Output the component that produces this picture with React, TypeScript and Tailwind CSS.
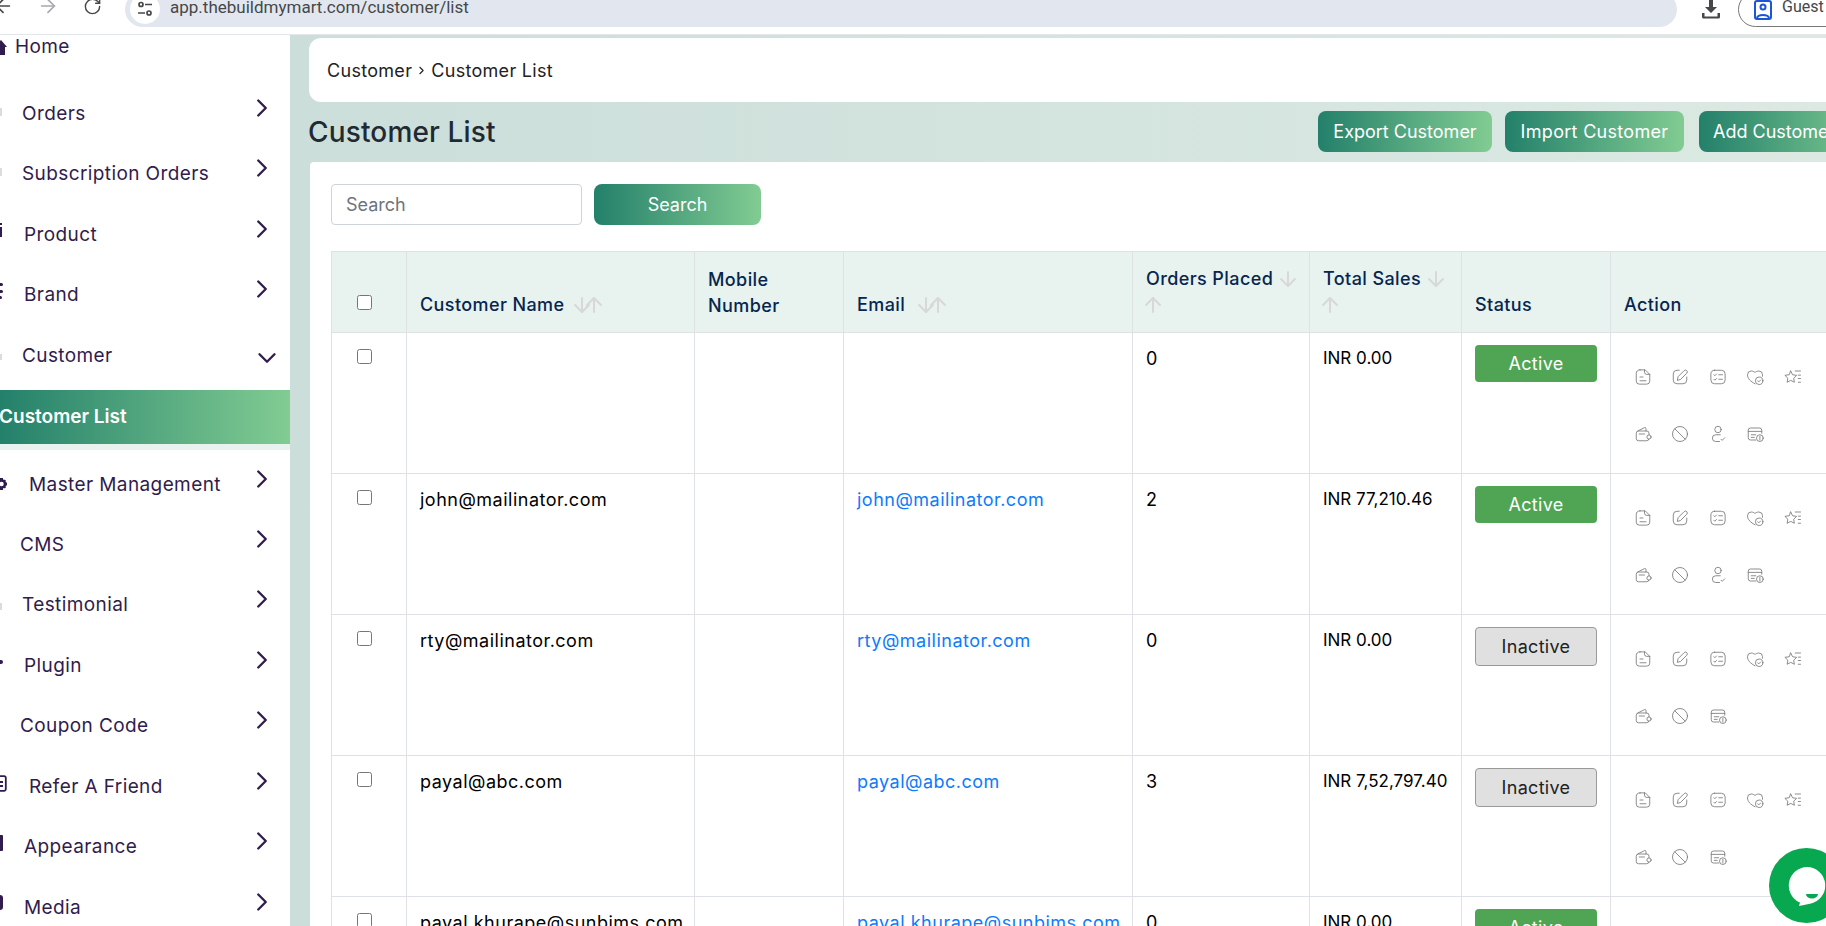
import React from "react";
import { ArrowDown, ArrowLeft, ArrowRight, ArrowUp, ChevronDown, ChevronRight, RotateCw } from "lucide-react";

const grad = "bg-[linear-gradient(90deg,#23806a,#82cc93)]";

function Ic({ children }: { children: React.ReactNode }) {
  return (
    <svg width="18" height="18" viewBox="0 0 24 24" fill="none" stroke="#757575" strokeWidth="1.1" strokeLinecap="round" strokeLinejoin="round">
      {children}
    </svg>
  );
}
const Note = () => <Ic><path d="M8 2.500h7l6 6v9a4 4 0 0 1-4 4H7a4 4 0 0 1-4-4v-10a5 5 0 0 1 5-5z" /><path d="M14 2.500v3a3 3 0 0 0 3 3h4" /><path d="M8 12h4M8 17h8" /></Ic>;
const Pen = () => <Ic><path d="M11 3H8a5 5 0 0 0-5 5v8a5 5 0 0 0 5 5h8a5 5 0 0 0 5-5v-4" /><path d="M8.500 16l1-4.500 8-8a2.300 2.300 0 0 1 3.500 3.500l-8 8z" /></Ic>;
const Check = () => <Ic><rect x="2.500" y="3" width="19" height="18" rx="5" /><path d="M6.500 9l1.300 1.300L10 8M6.500 15l1.300 1.300L10 14M13 9h5M13 15h5" /></Ic>;
const Heart = () => <Ic><path d="M12 21C6 18 2 14 2 9a5 5 0 0 1 5-5c2 0 4 1 5 2 1-1 3-2 5-2a5 5 0 0 1 5 5v2" /><circle cx="17.500" cy="17" r="5" fill="#fff" /><path d="M15.500 17l1.500 1.500 2.500-2.500" /></Ic>;
const Star = () => <Ic><path d="M9 4l2.400 5 5.400.8-3.900 3.800.9 5.400L9 16.500 4.200 19l.9-5.400L1.200 9.800l5.400-.8z" /><path d="M15 4h7M19 9.500h3M19 14h3M19 19h3" /></Ic>;
const Wallet = () => <Ic><path d="M20 13v-2a3 3 0 0 0-3-3H6a3 3 0 0 0-3 3v7a3 3 0 0 0 3 3h11a3 3 0 0 0 3-3" /><path d="M5 8l9-4.500a1.500 1.500 0 0 1 2 1.300V8" /><circle cx="20" cy="16" r="2.800" fill="#fff" /><path d="M7 12h7" /></Ic>;
const Ban = () => <Ic><circle cx="12" cy="12" r="10" /><path d="M5 5l14 14" /></Ic>;
const UserCheck = () => <Ic><circle cx="12" cy="6" r="4.300" /><path d="M15 13H9a4.500 4.500 0 0 0 0 9h5" /><path d="M16 19l1.500 1.500L21 17" /></Ic>;
const Bill = () => <Ic><path d="M21 11V7a3 3 0 0 0-3-3H6a3 3 0 0 0-3 3v10a3 3 0 0 0 3 3h7" /><path d="M3 8.500h18M7 13h6M7 16.500h4" /><circle cx="18.500" cy="17.500" r="4.500" fill="#fff" /><path d="M18.500 15v5" /></Ic>;

const faint = "absolute left-0 w-[1.5px] bg-[#dcdcdc]";
const dark = "absolute left-0 bg-[#301c4d]";

const nav: { t: string; p: string; h: string; m?: React.ReactNode }[] = [
  { t: "Orders", p: "pl-[22px]", h: "h-[60px]", m: <span className={`${faint} top-[24px] h-[8px]`} /> },
  { t: "Subscription Orders", p: "pl-[22px]", h: "h-[61px]", m: <span className={`${faint} top-[24px] h-[8px]`} /> },
  { t: "Product", p: "pl-[24px]", h: "h-[60px]", m: <><span className={`${dark} top-[18px] w-[2px] h-[2px]`} /><span className={`${dark} top-[22px] w-[2px] h-[10px]`} /></> },
  { t: "Brand", p: "pl-[24px]", h: "h-[61px]", m: <><span className={`${dark} top-[18px] w-[3px] h-[3px] rounded-r-full`} /><span className={`${dark} top-[25px] w-[3px] h-[3px] rounded-r-full`} /><span className={`${dark} top-[31px] w-[2px] h-[3px] rounded-r-full`} /></> },
];
const nav2: { t: string; p: string; h: string; m?: React.ReactNode }[] = [
  { t: "Master Management", p: "pl-[29px]", h: "h-[60px]", m: <svg className="absolute left-0 top-[23px]" width="7" height="12" viewBox="0 0 7 12"><circle cx="1.500" cy="6" r="3.500" fill="none" stroke="#301c4d" strokeWidth="2.500" /><path d="M0 0h3v2H0zM0 10h3v2H0zM5 4.500h2v3H5zM4 1.500l2 1-1 2-2-1zM4 10.500l2-1-1-2-2 1z" fill="#301c4d" /></svg> },
  { t: "CMS", p: "pl-[20px]", h: "h-[60px]" },
  { t: "Testimonial", p: "pl-[22px]", h: "h-[61px]", m: <span className={`${faint} top-[28px] h-[7px]`} /> },
  { t: "Plugin", p: "pl-[24px]", h: "h-[60px]", m: <span className={`${dark} top-[24px] w-[2.500px] h-[4px] rounded-r-full`} /> },
  { t: "Coupon Code", p: "pl-[20px]", h: "h-[61px]" },
  { t: "Refer A Friend", p: "pl-[29px]", h: "h-[60px]", m: <svg className="absolute left-0 top-[18px]" width="7" height="17" viewBox="0 0 7 17"><path d="M-3 1.200h7a1.800 1.800 0 0 1 1.800 1.800v11a1.800 1.800 0 0 1-1.800 1.800h-7" fill="none" stroke="#301c4d" strokeWidth="1.800" /><path d="M0 6h3v2H0zM0 10h3v2H0z" fill="#301c4d" /></svg> },
  { t: "Appearance", p: "pl-[24px]", h: "h-[61px]", m: <span className={`${dark} top-[18px] w-[2.500px] h-[16px] rounded-r-[1px]`} /> },
  { t: "Media", p: "pl-[24px]", h: "h-[60px]", m: <span className={`${dark} top-[17px] w-[3px] h-[15px] rounded-r-full`} /> },
];

function NavItem({ t, p, h, m }: { t: string; p: string; h: string; m?: React.ReactNode }) {
  return (
    <div className={`flex items-center justify-between pr-[20px] ${p} ${h} relative`}>
      {m}
      <span className="text-[19px] tracking-[0.4px]">{t}</span>
      <ChevronRight className="w-[30px] h-[30px] -mt-[13px] -mr-[7px]" strokeWidth={1.9} />
    </div>
  );
}

const arrow = "w-[24px] h-[24px] text-[#d8d8d8] shrink-0";

function Sort({ label, wrap, gap }: { label: string; wrap?: boolean; gap: string }) {
  if (wrap) {
    return (
      <div className="leading-[28px]">
        <div className={`flex items-center whitespace-nowrap ${gap}`}>
          <span className="shrink-0">{label}</span>
          <ArrowDown className={arrow} strokeWidth={2} />
        </div>
        <ArrowUp className={`${arrow} -ml-[5px] mb-[2px]`} strokeWidth={2} />
      </div>
    );
  }
  return (
    <div className={`flex items-center leading-[28px] whitespace-nowrap ${gap}`}>
      <span>{label}</span>
      <span className="flex -space-x-[12px]">
        <ArrowDown className={arrow} strokeWidth={2} />
        <ArrowUp className={arrow} strokeWidth={2} />
      </span>
    </div>
  );
}

const rows = [
  { n: "", e: "", o: "0", s: "INR 0.00", a: true, u: true },
  { n: "john@mailinator.com", e: "john@mailinator.com", o: "2", s: "INR 77,210.46", a: true, u: true },
  { n: "rty@mailinator.com", e: "rty@mailinator.com", o: "0", s: "INR 0.00", a: false, u: false },
  { n: "payal@abc.com", e: "payal@abc.com", o: "3", s: "INR 7,52,797.40", a: false, u: false },
  { n: "payal.khurape@sunbims.com", e: "payal.khurape@sunbims.com", o: "0", s: "INR 0.00", a: true, u: false },
];

const th = "border border-[#dde3e3] px-[13px] pb-[13px] align-bottom text-left font-medium tracking-[0.4px]";
const cell = "border border-[#dee2e6] px-[13px] align-top whitespace-nowrap";
const td = `${cell} pt-[12px] tracking-[0.5px]`;

export default function App() {
  return (
    <div className="relative w-[1826px] h-[926px] overflow-hidden bg-white text-[18px] font-['Inter','Noto_Sans',sans-serif]">
      <header className="h-[35px] overflow-hidden border-b border-[#e3e7ea] bg-white">
        <div className="flex items-center h-[35px] -mt-[8px] font-['Roboto',sans-serif] text-[#45474a]">
          <ArrowLeft className="w-[22px] h-[22px] -ml-[8px] -mt-[7px] shrink-0" strokeWidth={1.8} />
          <ArrowRight className="w-[22px] h-[22px] ml-[23px] -mt-[7px] text-[#a5a8ad] shrink-0" strokeWidth={1.8} />
          <RotateCw className="w-[19px] h-[19px] ml-[24px] -mt-[7px] shrink-0" strokeWidth={1.8} />
          <div className="ml-[23px] w-[1552px] shrink-0 h-[35px] rounded-full bg-[#e2e7ef] flex items-center pl-[5px]">
            <span className="w-[30px] h-[30px] rounded-full bg-white flex items-center justify-center shrink-0 -mt-[1px]">
              <svg width="16" height="16" viewBox="0 0 16 16" fill="none" stroke="#45474a" strokeWidth="1.700"><circle cx="4" cy="3.500" r="2" /><path d="M8 3.500h7M1 12h7" /><circle cx="12" cy="12" r="2" /></svg>
            </span>
            <span className="ml-[10px] text-[17px] -mt-[4px]">app.thebuildmymart.com/customer/list</span>
          </div>
          <svg className="ml-[23px] shrink-0 -mt-[2px]" width="22" height="22" viewBox="0 0 22 22" fill="#45474a"><path d="M9 1h4v8h4l-6 6-6-6h4z" /><path d="M2 15h2.500v3.500h13V15H20v4a1.500 1.500 0 0 1-1.500 1.500h-15A1.500 1.500 0 0 1 2 19z" /></svg>
          <div className="ml-[16px] h-[35px] w-[120px] shrink-0 rounded-full border border-[#777] flex items-center pl-[15px] gap-[10px]">
            <svg width="18" height="20" viewBox="0 0 18 20" fill="none" stroke="#1a56d6" strokeWidth="2"><rect x="1" y="1" width="16" height="18" rx="2" /><circle cx="9" cy="7" r="2.500" /><path d="M3 18c1-4 11-4 12 0" /></svg>
            <span className="text-[16px] -mt-[5px]">Guest</span>
          </div>
        </div>
      </header>

      <div className="flex h-[891px]">
        <aside className="w-[290px] shrink-0 bg-white text-[#301c4d] overflow-hidden">
          <div className="flex items-center h-[40px] pl-[15px] -mt-[8px] relative">
            <svg className="absolute left-0 top-[13px]" width="7" height="15" viewBox="0 0 7 15" fill="#301c4d"><path d="M-6 7L1 0l6 7H5v8H-4V7z" /></svg>
            <span className="text-[19px] tracking-[0.4px]">Home</span>
          </div>
          <div className="h-[17px]" />
          {nav.map((n) => <NavItem key={n.t} {...n} />)}
          <div className="flex items-center justify-between pl-[22px] pr-[8px] h-[60px] relative">
            <span className={`${faint} top-[28px] h-[6px]`} />
            <span className="text-[19px] tracking-[0.4px]">Customer</span>
            <ChevronDown className="w-[30px] h-[30px] mt-[3px]" strokeWidth={1.9} />
          </div>
          <div className={`h-[54px] flex items-center text-white font-semibold text-[19px] mt-[4px] ${grad}`}><span className="-ml-[1px]">Customer List</span></div>
          <div className="h-[6px] bg-[#e8f2ee]" />
          <div className="h-[5px]" />
          {nav2.map((n) => <NavItem key={n.t} {...n} />)}
        </aside>

        <main className="flex-1 min-w-0 pl-[19px] pt-[3px] bg-[linear-gradient(90deg,#cbdeda,#dce9e3)] overflow-hidden">
          <div className="h-[64px] bg-white rounded-l-[12px] flex items-center pl-[18px] text-[18px] tracking-[0.3px] text-[#222]">
            Customer <ChevronRight className="w-[13px] h-[13px] mx-[3px]" /> Customer List
          </div>
          <div className="h-[60px] flex items-center">
            <h1 className="w-[1010px] shrink-0 text-[28px] font-medium tracking-[0.15px] text-[#1f2a33] -ml-[1px]">Customer List</h1>
            <div className="flex gap-[13px] shrink-0 text-white text-[18px] mb-[1px]">
              <button className={`w-[174px] h-[41px] shrink-0 rounded-[8px] ${grad}`}>Export Customer</button>
              <button className={`w-[179px] h-[41px] shrink-0 rounded-[8px] tracking-[0.3px] ${grad}`}>Import Customer</button>
              <button className={`w-[180px] h-[41px] shrink-0 ml-[2px] rounded-[8px] ${grad} text-left pl-[14px]`}>Add Customer</button>
            </div>
          </div>
          <div className="ml-[1px] h-[800px] bg-white pl-[21px] pt-[22px] rounded-tl-[4px]">
            <div className="flex gap-[12px] h-[41px]">
              <input readOnly placeholder="Search" className="w-[251px] h-[41px] border border-[#ced4da] rounded-[4px] px-[14px] text-[18px] placeholder:text-[#6c757d] bg-white" />
              <button className={`w-[167px] h-[41px] rounded-[8px] text-white text-[18px] ${grad}`}>Search</button>
            </div>
            <table className="mt-[26px] w-[1700px] table-fixed border-collapse text-[18px] text-black">
              <colgroup>
                <col className="w-[75px]" /><col className="w-[288px]" /><col className="w-[149px]" /><col className="w-[289px]" /><col className="w-[177px]" /><col className="w-[152px]" /><col className="w-[149px]" /><col />
              </colgroup>
              <thead className="bg-[#e8f2ee] text-[#06264f]">
                <tr className="h-[81px]">
                  <th className={th}><input type="checkbox" readOnly className="w-[15px] h-[15px] block ml-[12px] mb-[9px]" /></th>
                  <th className={th}><Sort label="Customer Name" gap="gap-[6px]" /></th>
                  <th className={`${th} leading-[26px]`}>Mobile<br />Number</th>
                  <th className={th}><Sort label="Email" gap="gap-[9px]" /></th>
                  <th className={th}><Sort label="Orders Placed" wrap gap="gap-[3px]" /></th>
                  <th className={th}><Sort label="Total Sales" wrap gap="gap-[3px]" /></th>
                  <th className={`${th} leading-[28px]`}>Status</th>
                  <th className={`${th} leading-[28px]`}>Action</th>
                </tr>
              </thead>
              <tbody>
                {rows.map((r, i) => (
                  <tr key={i} className="h-[141px]">
                    <td className={td}><input type="checkbox" readOnly className="w-[15px] h-[15px] block ml-[12px] mt-[4px]" /></td>
                    <td className={td}>{r.n}</td>
                    <td className={td}></td>
                    <td className={`${td} text-[#0d7bfd]`}>{r.e}</td>
                    <td className={td}>{r.o}</td>
                    <td className={`${cell} pt-[13px] text-[17px] tracking-[0px]`}>{r.s}</td>
                    <td className={`${cell} pt-[12px] tracking-[0.3px]`}>
                      {r.a ? (
                        <button className="w-[122px] h-[37px] rounded-[4px] bg-[#4fa553] text-white text-[18px]">Active</button>
                      ) : (
                        <button className="w-[122px] h-[39px] rounded-[4px] bg-[#e0e0e0] border border-[#999] text-[#222] text-[18px]">Inactive</button>
                      )}
                    </td>
                    <td className={`${cell} pt-[35px]`}>
                      <div className="grid grid-cols-[repeat(5,37.5px)] auto-rows-[57px] h-[90px] justify-items-center">
                        <Note /><Pen /><Check /><Heart /><Star />
                        <Wallet /><Ban />{r.u && <UserCheck />}<Bill />
                      </div>
                    </td>
                  </tr>
                ))}
              </tbody>
            </table>
          </div>
        </main>
      </div>

      <div className="absolute left-[1769px] top-[848px] w-[75px] h-[75px] rounded-full bg-[#07a84f] flex items-center justify-center">
        <svg width="40" height="40" viewBox="0 0 40 40"><path d="M20 1a18.500 18.500 0 0 1 3 36.700L12 40l1-3.500A18.500 18.500 0 0 1 20 1z" fill="#fff" /><path d="M19 28h12a6 4.500 0 0 1-12 0z" fill="#07a84f" /></svg>
      </div>
    </div>
  );
}
